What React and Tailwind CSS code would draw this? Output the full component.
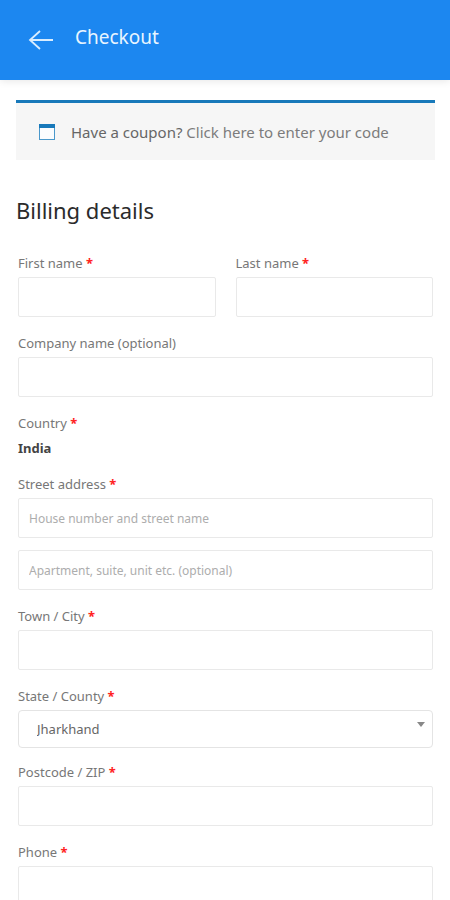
const inputClass =
  "block h-10 w-full rounded-xs border border-[#e9e9e9] bg-white px-2.5 text-xs text-[#555] placeholder:text-[#adadad] outline-none focus:border-[#1c86ee]";

function Label({ htmlFor, required, children }) {
  return (
    <label htmlFor={htmlFor} className="block text-[13px] leading-5 text-[#777]">
      {children}
      {required && <span className="font-bold text-[#f22]"> *</span>}
    </label>
  );
}

function TextField({ id, label, required, type = "text" }) {
  return (
    <div className="flex min-w-0 flex-col gap-1">
      <Label htmlFor={id} required={required}>{label}</Label>
      <input id={id} name={id} type={type} required={required} className={inputClass} />
    </div>
  );
}

function Header() {
  return (
    <header className="flex h-20 items-center gap-[21px] bg-[#1c87f0] px-7 pb-1 shadow-[0_1px_8px_rgba(0,0,0,0.1)]">
      <button type="button" aria-label="Back" className="mt-1 text-[#d9edff]">
        <svg viewBox="0 0 26 22" className="h-[22px] w-[26px]" fill="none" stroke="currentColor" strokeWidth="1.8">
          <path d="M25 11H2M12 2L2 11l10 9" />
        </svg>
      </button>
      <h1 className="pb-0.5 text-[19px] leading-7 text-[#e8f5ff]">Checkout</h1>
    </header>
  );
}

function CouponNotice() {
  return (
    <div className="flex items-center gap-4 border-t-3 border-[#1879ba] bg-[#f6f6f6] px-[23px] pt-[17px] pb-4 text-[15px] leading-6 text-[#666]">
      <svg viewBox="0 0 16 16" className="h-4 w-4 shrink-0" aria-hidden="true">
        <rect x="0.5" y="0.5" width="15" height="15" fill="#fafcfe" stroke="#4a98cb" />
        <rect width="16" height="4" fill="#1879ba" />
      </svg>
      <p>
        Have a coupon? <a href="#coupon" className="text-[#7c7c7c]">Click here to enter your code</a>
      </p>
    </div>
  );
}

export default function App() {
  return (
    <div className="bg-white font-['Noto_Sans','Open_Sans',sans-serif]">
      <Header />
      <main className="pt-5 pr-[15px] pl-4">
        <CouponNotice />
        <form>
          <h2 className="mt-8 text-[22px] leading-9 text-[#2b2b2b]">Billing details</h2>
          <div className="mt-[25px] px-0.5">
            <div className="mb-4 grid grid-cols-2 gap-5">
              <TextField id="first-name" label="First name" required />
              <TextField id="last-name" label="Last name" required />
            </div>
            <div className="mb-4">
              <TextField id="company" label="Company name (optional)" />
            </div>
            <div className="mb-4 flex flex-col gap-[5px]">
              <p className="text-[13px] leading-5 text-[#777]">
                Country<span className="font-bold text-[#f22]"> *</span>
              </p>
              <strong className="text-[13px] leading-5 text-[#444]">India</strong>
            </div>
            <div className="mb-4 flex flex-col gap-1">
              <Label htmlFor="street" required>Street address</Label>
              <div className="flex flex-col gap-3">
                <input id="street" name="street" type="text" required placeholder="House number and street name" className={inputClass} />
                <input
                  id="apartment"
                  name="apartment"
                  type="text"
                  aria-label="Apartment, suite, unit etc. (optional)"
                  placeholder="Apartment, suite, unit etc. (optional)"
                  className={inputClass}
                />
              </div>
            </div>
            <div className="mb-4">
              <TextField id="city" label="Town / City" required />
            </div>
            <div className="mb-3.5 flex flex-col gap-1">
              <Label htmlFor="state" required>State / County</Label>
              <div className="relative">
                <select
                  id="state"
                  name="state"
                  defaultValue="Jharkhand"
                  className="block h-[38px] w-full appearance-none rounded-sm border border-[#e4e4e4] bg-white px-[18px] pt-0.5 text-[13px] text-[#666] outline-none"
                >
                  <option>Bihar</option>
                  <option>Jharkhand</option>
                  <option>West Bengal</option>
                </select>
                <svg viewBox="0 0 8 5" className="pointer-events-none absolute top-3 right-2 h-[5px] w-2" aria-hidden="true">
                  <path d="M0 0h8L4 5z" fill="#888" />
                </svg>
              </div>
            </div>
            <div className="mb-4">
              <TextField id="postcode" label="Postcode / ZIP" required />
            </div>
            <TextField id="phone" label="Phone" type="tel" required />
          </div>
        </form>
      </main>
    </div>
  );
}
